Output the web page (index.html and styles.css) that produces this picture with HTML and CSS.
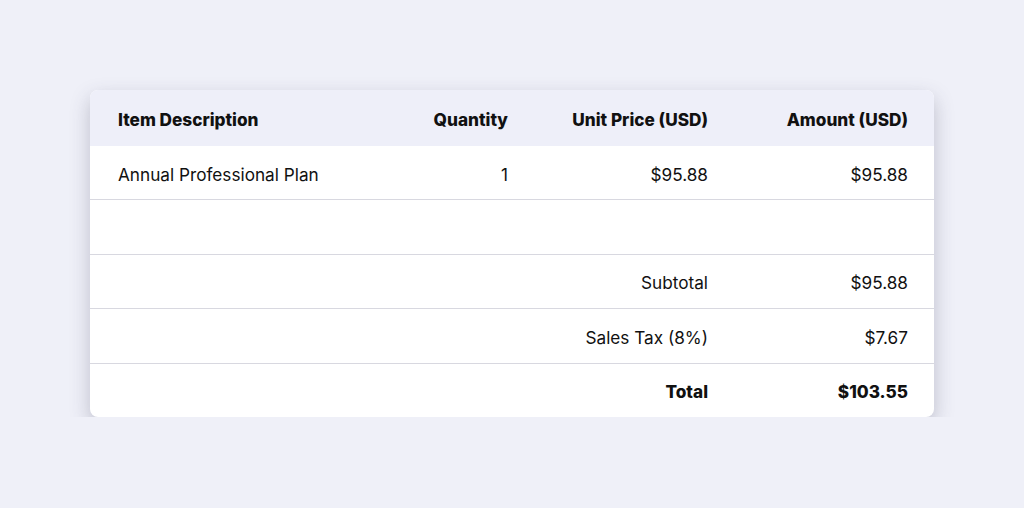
FILE: index.html
```html
<!DOCTYPE html>
<html>

<head>
  <meta charset="utf-8" />
  <meta name="viewport" content="width=device-width, initial-scale=1" />
  <title>Invoice Items</title>
  <link rel="stylesheet" href="styles.css">
</head>

<body>
  <div class="card">
    <table class="invoice">
      <thead>
        <tr>
          <th class="col-desc">Item Description</th>
          <th class="col-qty num">Quantity</th>
          <th class="col-price num">Unit Price (USD)</th>
          <th class="col-amount num">Amount (USD)</th>
        </tr>
      </thead>
      <tbody>
        <tr>
          <td>Annual Professional Plan</td>
          <td class="num">1</td>
          <td class="num">$95.88</td>
          <td class="num">$95.88</td>
        </tr>
        <!-- empty spacer row -->
        <tr>
          <td></td>
          <td></td>
          <td></td>
          <td></td>
        </tr>
        <tr>
          <td></td>
          <td></td>
          <td class="num">Subtotal</td>
          <td class="num">$95.88</td>
        </tr>
        <tr>
          <td></td>
          <td></td>
          <td class="num">Sales Tax (8%)</td>
          <td class="num">$7.67</td>
        </tr>
        <tr class="total-row">
          <td></td>
          <td></td>
          <td class="num">Total</td>
          <td class="num">$103.55</td>
        </tr>
      </tbody>
    </table>
  </div>
</body>

</html>
```

FILE: styles.css
```css
body {
  margin: 0;
  background: #eff0f8;
  color: #111;
  font-family: Inter, "Noto Sans", sans-serif;
  font-size: 17.2px;
}

.card {
  width: 844px;
  margin: 90px auto 0;
  background: white;
  border-radius: 8px;
  overflow: hidden;
  box-shadow: 0 8px 20px rgba(60, 60, 90, 0.28);
}

.invoice {
  width: 100%;
  border-collapse: collapse;
  table-layout: fixed;
}

.invoice th,
.invoice td {
  padding: 3px 26px 0 28px;
  text-align: left;
}

.invoice th {
  height: 53px;
  background: #eeeff9;
  font-weight: 800;
}

.invoice td {
  height: 50.4px;
}

.invoice tbody tr + tr td {
  border-top: 1px solid #d8d8e0;
}

/* fixed layout: widths are content widths, padding (54px) is added */
.col-qty {
  width: 106px;
}

.col-price,
.col-amount {
  width: 146px;
}

.invoice .num {
  text-align: right;
}

.total-row td {
  font-weight: 800;
}
```
